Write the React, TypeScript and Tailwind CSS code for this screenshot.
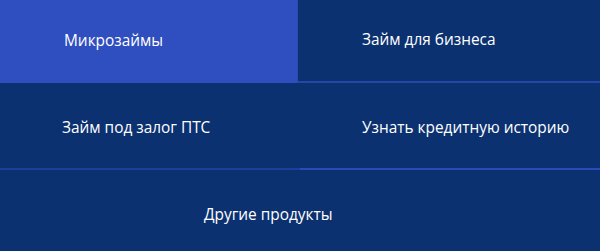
export default function App() {
  return (
    <div className="w-[600px] h-[251px] bg-[#0b3170] text-[15.4px] text-white font-['Open_Sans',sans-serif] overflow-hidden">
      <div className="grid grid-cols-[297px_303px] h-[83px]">
        <div className="bg-[#2f4ebf] flex items-center pl-[64px] pb-[1px]">Микрозаймы</div>
        <div className="border-l border-[#2a4cb3] border-b-2 border-b-[#2447a8] flex items-center pl-[64px] pb-[1px]">
          Займ для бизнеса
        </div>
      </div>
      <div className="grid grid-cols-[300px_300px] h-[87px]">
        <div className="border-b-2 border-[#1d3f99] flex items-center pl-[62px] pt-[5px]">Займ под залог ПТС</div>
        <div className="border-b-2 border-[#2a4cb8] flex items-center pl-[62px] pt-[5px]">Узнать кредитную историю</div>
      </div>
      <div className="h-[81px] flex items-center pl-[204px] pt-[9px]">Другие продукты</div>
    </div>
  );
}
